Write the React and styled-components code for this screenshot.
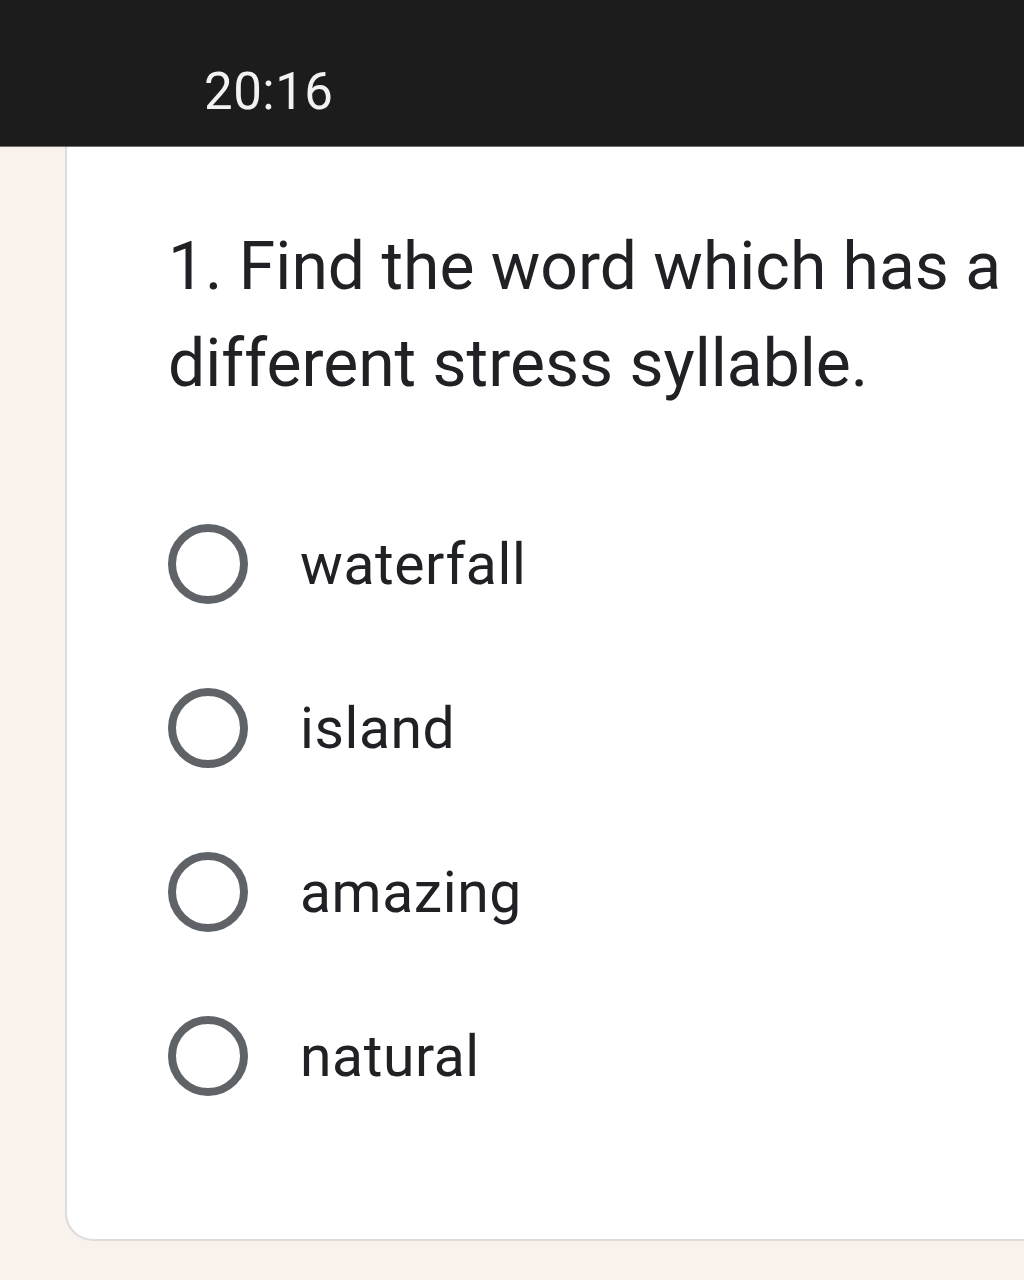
import React from "react";
import styled, { createGlobalStyle } from "styled-components";

const GlobalStyle = createGlobalStyle`
  html, body {
    margin: 0;
    padding: 0;
    background: #f9f1ec;
    font-family: Roboto, "Liberation Sans", sans-serif;
  }
`;

const Screen = styled.div`
  width: 1024px;
  height: 1280px;
  overflow: hidden;
  background: #f9f1ec;
  display: flex;
  flex-direction: column;
`;

const StatusBar = styled.div`
  height: 147px;
  flex-shrink: 0;
  background: #1c1c1c;
  border-bottom: 1px solid #6b6b6b;
  box-sizing: border-box;
  display: flex;
  align-items: center;
  padding-left: 204px;
  padding-top: 36px;
`;

const Clock = styled.span`
  color: #f2f2f2;
  font-size: 51px;
  letter-spacing: 0.5px;
`;

const Body = styled.div`
  padding-left: 65px;
`;

const Card = styled.div`
  width: 1020px;
  height: 1094px;
  box-sizing: border-box;
  background: #fff;
  border: 2px solid #dcdcdc;
  border-top: none;
  border-right: none;
  border-bottom-left-radius: 28px;
  padding: 71px 0 0 101px;
`;

const Question = styled.div`
  font-size: 66px;
  line-height: 97px;
  color: #202124;
  width: 860px;
`;

const Options = styled.div`
  margin-top: 70px;
  display: flex;
  flex-direction: column;
`;

const Option = styled.label`
  height: 164px;
  display: flex;
  align-items: center;
  gap: 52px;
`;

const Radio = styled.span`
  width: 80px;
  height: 80px;
  box-sizing: border-box;
  border: 8px solid #5f6368;
  border-radius: 50%;
  flex-shrink: 0;
`;

const OptionText = styled.span`
  font-size: 57px;
  letter-spacing: 0.6px;
  color: #202124;
`;

const options = ["waterfall", "island", "amazing", "natural"];

export default function App() {
  return (
    <Screen>
      <GlobalStyle />
      <StatusBar>
        <Clock>20:16</Clock>
      </StatusBar>
      <Body>
        <Card>
          <Question>1. Find the word which has a different stress syllable.</Question>
          <Options>
            {options.map((o) => (
              <Option key={o}>
                <Radio />
                <OptionText>{o}</OptionText>
              </Option>
            ))}
          </Options>
        </Card>
      </Body>
    </Screen>
  );
}
